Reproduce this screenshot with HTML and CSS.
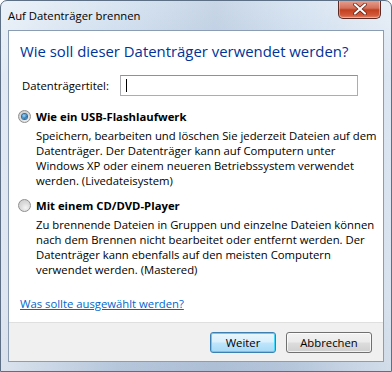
FILE: index.html
```html
<!DOCTYPE html>
<html lang="de">
<head>
  <meta charset="UTF-8">
  <title>Auf Datenträger brennen</title>
  <link rel="stylesheet" href="styles.css">
</head>
<body>
  <div class="window">
    <div class="titlebar">
      <span class="title">Auf Datenträger brennen</span>
      <button class="close-btn" title="Schließen">
        <svg width="14" height="12" viewBox="0 0 14 12">
          <path d="M2 1.5 L12 10.5 M12 1.5 L2 10.5" stroke="#5a1a10" stroke-width="3.6" stroke-linecap="round"/>
          <path d="M2 1.5 L12 10.5 M12 1.5 L2 10.5" stroke="#fff" stroke-width="2.2" stroke-linecap="round"/>
        </svg>
      </button>
    </div>
    <div class="client">
      <div class="content">
        <h1 class="instruction">Wie soll dieser Datenträger verwendet werden?</h1>
        <div class="form-row">
          <label class="field-label" for="disc-title">Datenträgertitel:</label>
          <div class="textbox"><span class="caret"></span></div>
        </div>
        <div class="option">
          <span class="radio checked"></span>
          <div class="option-title">Wie ein USB-Flashlaufwerk</div>
          <p class="option-desc">Speichern, bearbeiten und löschen Sie jederzeit Dateien auf dem Datenträger. Der Datenträger kann auf Computern unter Windows XP oder einem neueren Betriebssystem verwendet werden. (Livedateisystem)</p>
        </div>
        <div class="option">
          <span class="radio"></span>
          <div class="option-title">Mit einem CD/DVD-Player</div>
          <p class="option-desc">Zu brennende Dateien in Gruppen und einzelne Dateien können nach dem Brennen nicht bearbeitet oder entfernt werden. Der Datenträger kann ebenfalls auf den meisten Computern verwendet werden. (Mastered)</p>
        </div>
        <a class="help-link" href="#">Was sollte ausgewählt werden?</a>
      </div>
      <div class="footer">
        <button class="btn btn-default">Weiter</button>
        <button class="btn">Abbrechen</button>
      </div>
    </div>
  </div>
</body>
</html>
```
FILE: styles.css
```css
body {
  margin: 0;
  font-family: 'Open Sans', 'DejaVu Sans', sans-serif;
  font-size: 11.3px;
  color: #000;
  background: #fff;
}
.window {
  width: 392px;
  height: 372px;
  box-sizing: border-box;
  display: flex;
  flex-direction: column;
  border: 1px solid #5d6f84;
  border-radius: 7px 7px 0 0;
  background:
    linear-gradient(90deg, rgba(255,255,255,0.5) 0, rgba(255,255,255,0) 30%, rgba(150,170,195,0.25) 55%, rgba(255,255,255,0) 75%, rgba(255,255,255,0.4) 100%),
    linear-gradient(180deg, #d9e5f2 0%, #c5d6ea 20%, #bfd0e4 80%, #b5c6db 100%);
  overflow: hidden;
}
.titlebar {
  height: 29px;
  display: flex;
  justify-content: space-between;
  align-items: flex-start;
}
.title {
  padding: 7px 0 0 7px;
  line-height: 15px;
}
.close-btn {
  width: 43px;
  height: 19px;
  margin: -1px 10px 0 0;
  padding: 0;
  border: 1px solid #5c2a24;
  border-top: none;
  border-radius: 0 0 5px 5px;
  background: linear-gradient(180deg, #e8a493 0%, #d4715b 45%, #c2401f 55%, #d2593a 85%, #e48a6c 100%);
  box-shadow: inset 0 0 0 1px rgba(255,255,255,0.35);
  display: flex;
  align-items: center;
  justify-content: center;
}
.client {
  flex: 1;
  margin: 0 7px 9px 7px;
  border: 1px solid #8a9db3;
  background: #fff;
  display: flex;
  flex-direction: column;
}
.content {
  flex: 1;
  padding: 10px 2px 0 9px;
}
.instruction {
  margin: 0;
  padding-left: 2px;
  font-size: 14.9px;
  font-weight: 400;
  line-height: 21px;
  color: #003399;
}
.form-row {
  display: flex;
  align-items: center;
  margin-top: 13px;
  height: 21px;
}
.field-label {
  width: 98px;
  padding-left: 4px;
}
.textbox {
  width: 238px;
  height: 21px;
  box-sizing: border-box;
  border: 1px solid #abadb3;
  border-top-color: #8e9196;
  background: #fff;
  display: flex;
  align-items: center;
  padding-left: 5px;
}
.caret {
  width: 1px;
  height: 13px;
  background: #000;
}
.option {
  display: grid;
  grid-template-columns: 13px 1fr;
  column-gap: 5px;
  margin-top: 13px;
  line-height: 15px;
}
.option + .option {
  margin-top: 10px;
}
.radio {
  width: 13px;
  height: 13px;
  box-sizing: border-box;
  margin-top: 1px;
  border-radius: 50%;
  border: 1px solid #8f8f8f;
  background: radial-gradient(circle at 60% 70%, #f4f4f4 0, #dcdcdc 45%, #c8c8c8 100%);
  display: flex;
  align-items: center;
  justify-content: center;
}
.radio.checked::after {
  content: '';
  width: 5px;
  height: 5px;
  border-radius: 50%;
  background: radial-gradient(circle at 40% 35%, #a4d8f6 0, #2c7bb8 60%, #1a5a94 100%);
  box-shadow: 0 0 0 1px #2f6b99;
}
.option-title {
  font-weight: 700;
}
.option-desc {
  grid-column: 2;
  margin: 4px 0 0 0;
}
.help-link {
  display: inline-block;
  margin: 19px 0 0 2px;
  line-height: 15px;
  color: #0066cc;
  text-decoration: underline;
}
.footer {
  height: 39px;
  box-sizing: border-box;
  border-top: 1px solid #dfdfdf;
  background: #f0f0f0;
  display: flex;
  justify-content: flex-end;
  align-items: center;
  gap: 10px;
  padding: 0 11px 0 0;
}
.btn {
  height: 21px;
  width: 86px;
  padding: 0;
  font-family: inherit;
  font-size: 11.3px;
  color: #000;
  border: 1px solid #707070;
  border-radius: 3px;
  background: linear-gradient(180deg, #f2f2f2 0%, #ebebeb 48%, #dddddd 52%, #cfcfcf 100%);
  box-shadow: inset 0 0 0 1px rgba(255,255,255,0.7);
}
.btn-default {
  width: 66px;
  border-color: #3c7fb1;
  background: linear-gradient(180deg, #eaf6fd 0%, #d9f0fc 48%, #bee6fd 52%, #a7d9f5 100%);
  box-shadow: inset 0 0 0 1px #48d8fb;
}
```
